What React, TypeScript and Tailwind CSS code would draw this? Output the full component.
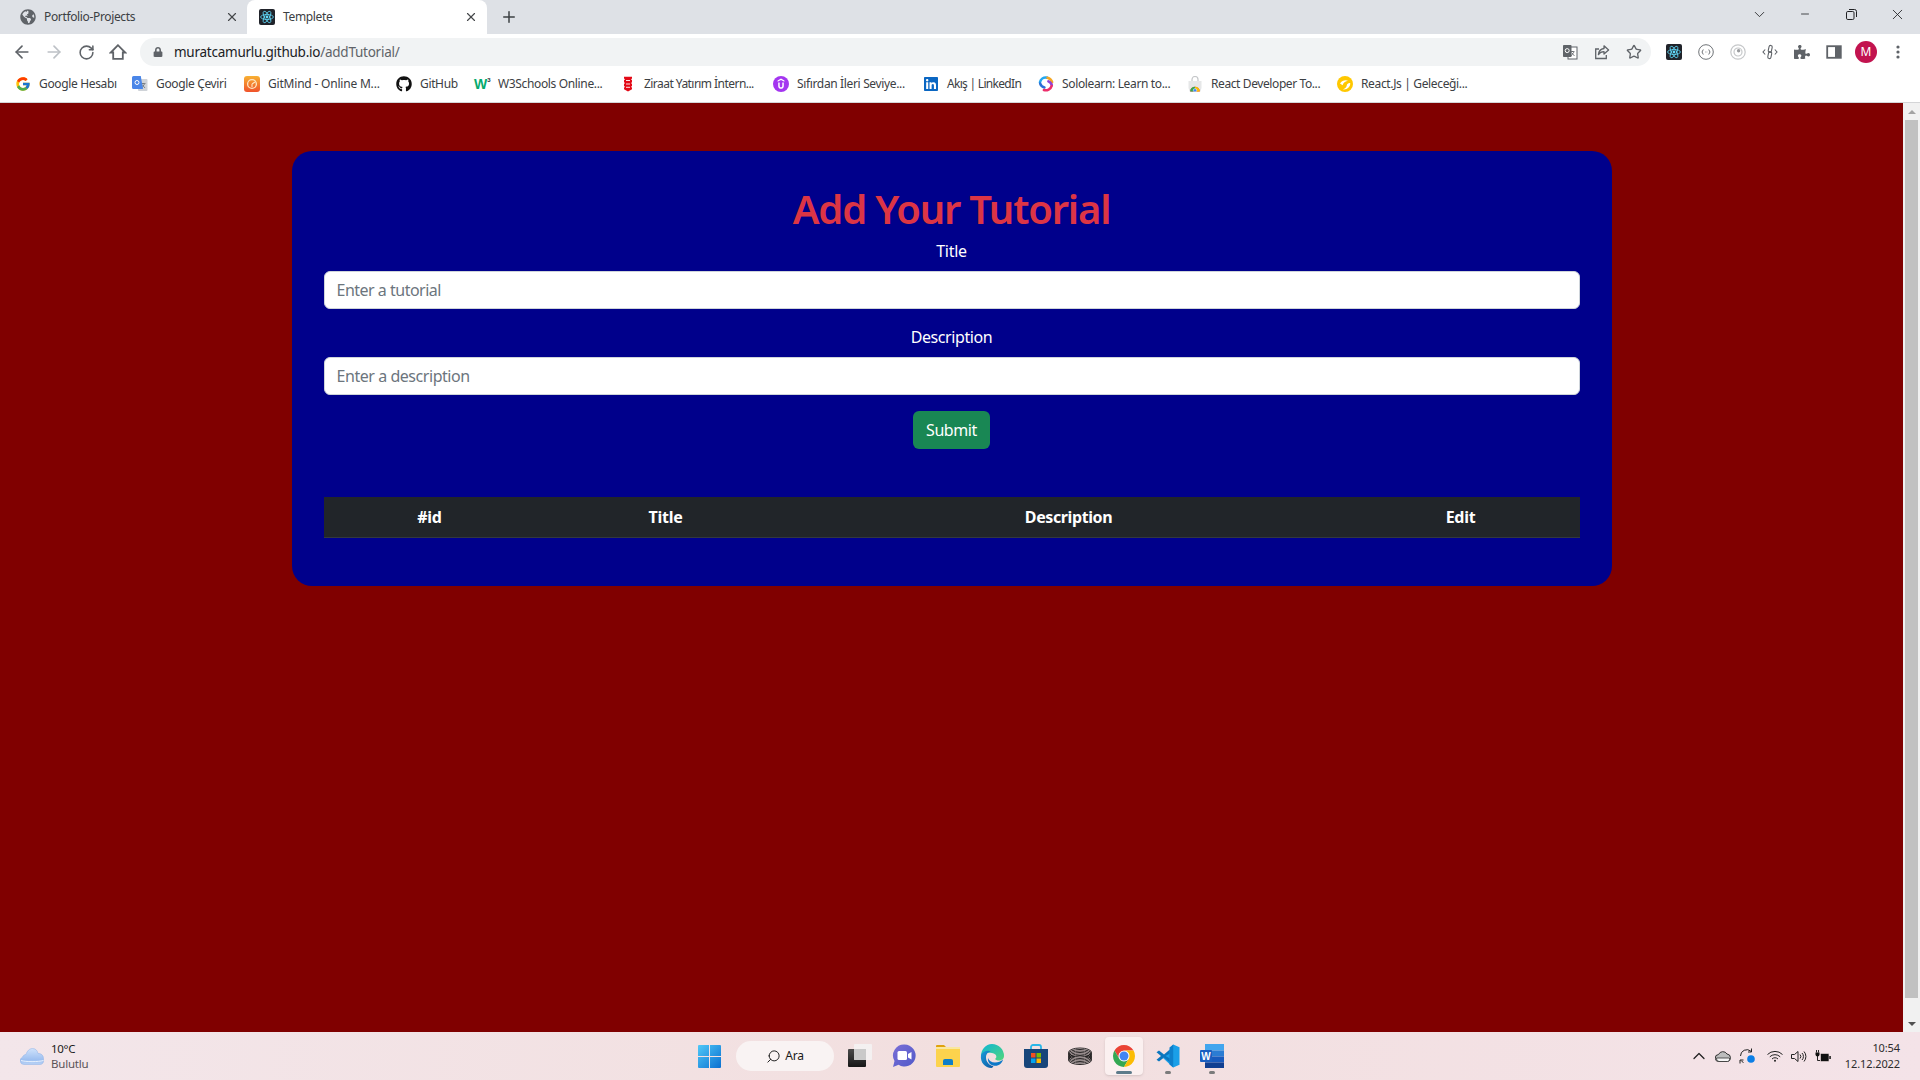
import React from "react";
import { ArrowLeft, ArrowRight, RotateCw, Star, X, Plus, ChevronDown, Minus, ChevronUp, Search } from "lucide-react";
import { FcGoogle } from "react-icons/fc";
import { FaGithub, FaGlobeAmericas, FaLock, FaPuzzlePiece, FaLinkedin } from "react-icons/fa";

const ReactLogo = () => (
  <svg width="16" height="16" viewBox="0 0 16 16">
    <rect width="16" height="16" rx="2" fill="#20232a" />
    <g fill="none" stroke="#61dafb" strokeWidth="0.8">
      <ellipse cx="8" cy="8" rx="6.4" ry="2.5" />
      <ellipse cx="8" cy="8" rx="6.4" ry="2.5" transform="rotate(60 8 8)" />
      <ellipse cx="8" cy="8" rx="6.4" ry="2.5" transform="rotate(120 8 8)" />
    </g>
    <circle cx="8" cy="8" r="1.4" fill="#61dafb" />
  </svg>
);

const HouseIcon = () => (
  <svg width="18" height="18" viewBox="0 0 18 18" fill="none" stroke="#5f6368" strokeWidth="1.8" strokeLinejoin="miter">
    <path d="M9 2.200 1.800 9.500h2.400v6.300h9.600V9.500h2.400z" />
  </svg>
);

const TranslateIcon = () => (
  <svg width="16" height="16" viewBox="0 0 16 16">
    <rect x="6" y="3" width="9" height="12" fill="#fff" stroke="#5f6368" strokeWidth="1" />
    <path d="M8.5 7.5h4M10.5 7v1M9 12l3-4M9.5 8.5l3 3.5" stroke="#5f6368" strokeWidth="0.8" fill="none" />
    <rect x="1" y="1" width="8.5" height="12" rx="0.8" fill="#5f6368" />
    <circle cx="5.2" cy="6.6" r="2" fill="none" stroke="#fff" strokeWidth="1" />
  </svg>
);

const ShareIcon = () => (
  <svg width="16" height="16" viewBox="0 0 16 16" fill="none" stroke="#5f6368" strokeWidth="1.3">
    <path d="M5 5H1.7v9.5h10.6V11" />
    <path d="M10 1.8 14.6 6 10 10V7.6c-2.8 0-4.4 1-5.6 3C4.7 7.4 6.3 5 10 4.5z" strokeLinejoin="round" />
  </svg>
);

const SidePanelIcon = () => (
  <svg width="16" height="16" viewBox="0 0 16 16">
    <rect x="1.2" y="2.2" width="13.6" height="11.6" fill="#fff" stroke="#5f6368" strokeWidth="1.8" />
    <rect x="9" y="2" width="6" height="12" fill="#5f6368" />
  </svg>
);

const ExtCircle = () => (
  <svg width="16" height="16" viewBox="0 0 16 16" fill="none" stroke="#5f6368">
    <circle cx="8" cy="8" r="7.3" strokeWidth="0.9" />
    <path d="M5.3 5.5 4 8l1.3 2.5M10.7 5.5 12 8l-1.3 2.5" strokeWidth="0.9" />
    <path d="M7 8h.5M8.7 8h.5" strokeWidth="0.9" />
  </svg>
);

const ExtTarget = () => (
  <svg width="16" height="16" viewBox="0 0 16 16" fill="none" stroke="#c6c8ca">
    <circle cx="8" cy="8" r="7.2" strokeWidth="1.2" />
    <circle cx="8" cy="8" r="4" strokeWidth="1.2" />
    <circle cx="8.6" cy="6.8" r="1.7" fill="#9a9c9f" stroke="none" />
  </svg>
);

const ExtChain = () => (
  <svg width="16" height="16" viewBox="0 0 16 16" fill="none" stroke="#5f6368" strokeWidth="1.1">
    <path d="M3.2 5.5 1 8l2.2 2.5M12.8 5.5 15 8l-2.2 2.5" />
    <rect x="6.6" y="1.3" width="3.2" height="7" rx="1.6" transform="rotate(12 8 5)" />
    <rect x="6.2" y="7.7" width="3.2" height="7" rx="1.6" transform="rotate(12 8 11)" />
  </svg>
);

const Dots = () => (
  <svg width="4" height="16" viewBox="0 0 4 16" fill="#5f6368">
    <circle cx="2" cy="3" r="1.6" />
    <circle cx="2" cy="8" r="1.6" />
    <circle cx="2" cy="13" r="1.6" />
  </svg>
);

const RestoreIcon = () => (
  <svg width="11" height="11" viewBox="0 0 11 11" fill="none" stroke="#202124" strokeWidth="1">
    <rect x="0.5" y="2.5" width="7.5" height="8" rx="1.3" />
    <path d="M3 .5h5.5a2 2 0 0 1 2 2V8" />
  </svg>
);

const GTranslate = () => (
  <svg width="16" height="16" viewBox="0 0 16 16">
    <rect x="6" y="3" width="9.5" height="12" rx="1" fill="#cfd3d8" />
    <path d="M9 7.5h4.5M11 7v1M9.5 12.5l3-4.5M10 8.5l3 3.5" stroke="#6b7075" strokeWidth="0.8" fill="none" />
    <path d="M1.5 0h7.3L11 13H1.5A1.5 1.5 0 0 1 0 11.5v-10A1.5 1.5 0 0 1 1.5 0z" fill="#4a86e8" />
    <circle cx="5" cy="6.5" r="2" fill="none" stroke="#fff" strokeWidth="1" />
  </svg>
);

const GitMind = () => (
  <svg width="16" height="16" viewBox="0 0 16 16">
    <defs>
      <linearGradient id="gm" x1="0" y1="0" x2="0" y2="1">
        <stop offset="0" stopColor="#f8b133" />
        <stop offset="1" stopColor="#f0522b" />
      </linearGradient>
    </defs>
    <rect width="16" height="16" rx="3" fill="url(#gm)" />
    <circle cx="8" cy="8" r="4.4" fill="none" stroke="#fde6c4" strokeWidth="1.3" />
    <path d="M8 8l3-2M8 8v3" stroke="#fde6c4" strokeWidth="1.1" />
  </svg>
);

const W3 = () => (
  <span className="flex h-4 w-4 items-start font-['Liberation_Sans',sans-serif] font-bold leading-none text-[#04aa6d]">
    <span className="text-[14px] leading-4">W</span>
    <span className="text-[6px] leading-[8px] text-[#282a35]">3</span>
  </span>
);

const Ziraat = () => (
  <svg width="16" height="16" viewBox="0 0 16 16">
    <path d="M4 .8h8v1.6l-1 .8 1 1v2l-1 .8 1 1v2l-1 .8 1 1v1.4L8 15.4 4 13.2v-1.4l1-1-1-.8v-2l1-1-1-.8v-2l1-1-1-.8z" fill="#e30a17" />
    <path d="M6 4.5h4M6 8h4M6 11.3h4" stroke="#fff" strokeWidth="0.9" />
  </svg>
);

const Udemy = () => (
  <svg width="16" height="16" viewBox="0 0 16 16">
    <circle cx="8" cy="8" r="8" fill="#a435f0" />
    <path d="M8 2.6 11.4 4.6v1.2L8 3.9 4.6 5.8V4.6z" fill="#fff" />
    <path d="M5.2 6.6h1.5v3.2c0 1 .5 1.5 1.3 1.5s1.3-.5 1.3-1.5V6.6h1.5v3.3c0 1.9-1.1 2.8-2.8 2.8s-2.8-.9-2.8-2.8z" fill="#fff" />
  </svg>
);

const Sololearn = () => (
  <svg width="16" height="16" viewBox="0 0 16 16" fill="none" strokeWidth="2.6" strokeLinecap="round">
    <path d="M9 1.6C5.6 1 2.6 3 2 6.3" stroke="#22a7f0" />
    <path d="M2.2 7.6c.7 2 2.3 3.3 4.2 3.8" stroke="#2b6fd6" />
    <path d="M9.5 1.8c2.4.6 4 2.2 4.6 4.4" stroke="#f5a623" />
    <path d="M13.8 9.3c-.3-1.8-1.6-3.2-3.4-3.9" stroke="#8e44d8" />
    <path d="M13.6 10c-.8 3.2-4.6 5-7.6 4" stroke="#ec2e6b" />
  </svg>
);

const WebstoreBag = () => (
  <svg width="16" height="16" viewBox="0 0 16 16">
    <path d="M5 5V3.5a3 3 0 0 1 6 0V5" fill="none" stroke="#c5c7c9" strokeWidth="1.2" />
    <path d="M1.5 5h13v7l-1 3.5h-11l-1-3.5z" fill="#e6e7e8" />
    <path d="M3.2 15.5a4.8 4.8 0 0 1 9.6 0z" fill="#ea4335" />
    <path d="M8 10.7a4.8 4.8 0 0 0-4.8 4.8H8z" fill="#34a853" />
    <path d="M8 10.7a4.8 4.8 0 0 1 4.8 4.8H8z" fill="#fbbc05" />
    <circle cx="8" cy="14.3" r="1.7" fill="#4285f4" stroke="#fff" strokeWidth="0.5" />
  </svg>
);

const Lifebox = () => (
  <svg width="16" height="16" viewBox="0 0 16 16">
    <circle cx="8" cy="8" r="8" fill="#ffc800" />
    <path d="M3 7.5C5 4.2 8.8 3.5 11 4.8 8.8 5 6.5 6.4 5.6 9.3zM13.2 7c.4 3.5-2.8 6.8-7.2 6.4 2.6-.9 3.6-2.4 4-4.8.4-1 1.6-1.6 3.2-1.6z" fill="#fff" />
  </svg>
);

const WindowsLogo = () => (
  <svg width="23" height="23" viewBox="0 0 23 23">
    <defs>
      <linearGradient id="win" x1="0" y1="0" x2="1" y2="1">
        <stop offset="0" stopColor="#4fc8f8" />
        <stop offset="1" stopColor="#0a6fd0" />
      </linearGradient>
    </defs>
    <path d="M1 0h10v11H0V1a1 1 0 0 1 1-1zM12 0h10a1 1 0 0 1 1 1v10H12zM0 12h11v11H1a1 1 0 0 1-1-1zM12 12h11v10a1 1 0 0 1-1 1H12z" fill="url(#win)" />
  </svg>
);

const TaskView = () => (
  <svg width="24" height="24" viewBox="0 0 24 24">
    <defs>
      <linearGradient id="tv" x1="0" y1="0" x2="0" y2="1">
        <stop offset="0" stopColor="#4a4a4a" />
        <stop offset="1" stopColor="#161616" />
      </linearGradient>
    </defs>
    <rect x="0" y="5" width="18" height="18" rx="1" fill="url(#tv)" />
    <rect x="6" y="0" width="18" height="16" rx="1" fill="#f4f4f4" fillOpacity="0.82" />
    <rect x="6" y="5" width="12" height="11" fill="#c8c8c8" fillOpacity="0.9" />
  </svg>
);

const Teams = () => (
  <svg width="24" height="24" viewBox="0 0 24 24">
    <defs>
      <linearGradient id="te" x1="0" y1="0" x2="1" y2="1">
        <stop offset="0" stopColor="#7a6fd6" />
        <stop offset="1" stopColor="#5059c9" />
      </linearGradient>
    </defs>
    <path d="M12.6 0.5a11 11 0 1 1-6 20.2L1 23l1.5-6A11 11 0 0 1 12.6 0.5z" fill="url(#te)" />
    <rect x="5.5" y="7" width="9.5" height="9" rx="1.5" fill="#fff" />
    <path d="M16 10l3.5-2v7.500L16 13.500z" fill="#fff" />
  </svg>
);

const Folder = () => (
  <svg width="24" height="24" viewBox="0 0 24 24">
    <path d="M0 2a1 1 0 0 1 1-1h7l3 3H0z" fill="#dfa20e" />
    <rect x="0" y="3" width="24" height="20" rx="1" fill="#fcd34d" />
    <rect x="0" y="3" width="24" height="2" fill="#f9e79f" />
    <path d="M7 21v-4a2 2 0 0 1 2-2h6a2 2 0 0 1 2 2v4z" fill="#0e7fc9" />
  </svg>
);

const Edge = () => (
  <svg width="24" height="24" viewBox="0 0 24 24">
    <defs>
      <linearGradient id="ed1" x1="0" y1="0" x2="1" y2="1">
        <stop offset="0" stopColor="#0fb5d6" />
        <stop offset="1" stopColor="#51d67a" />
      </linearGradient>
      <linearGradient id="ed2" x1="0" y1="0" x2="1" y2="1">
        <stop offset="0" stopColor="#1a9ad9" />
        <stop offset="1" stopColor="#0c59a4" />
      </linearGradient>
    </defs>
    <path d="M12 0a12 12 0 0 1 12 12c0 3-2.500 4.500-5 4.500-2 0-3.500-.7-4-1.500 2-1 2.500-5-3-6C7 8 2.500 9.500 1 12 1 6 5.500 0 12 0z" fill="url(#ed1)" />
    <path d="M1 11c2-4 7-5 10-3.500-3.500.5-5 3-5 6 0 4 3 8 7.500 8.500-.5.500-1 2-2 2C5 24 0 18.500 1 11z" fill="url(#ed2)" />
    <path d="M13 21.500c-3.500-.8-5.500-4-5-7.500.8 2.500 3.500 4.500 7 4.500 3 0 6-1 8-3-1 4-5 7.500-10 6z" fill="#0d78c8" />
  </svg>
);

const Store = () => (
  <svg width="24" height="24" viewBox="0 0 24 24">
    <path d="M7 7V3a2 2 0 0 1 2-2h6a2 2 0 0 1 2 2v4" fill="none" stroke="#29b6e8" strokeWidth="1.8" />
    <path d="M0 5h24v16a3 3 0 0 1-3 3H3a3 3 0 0 1-3-3z" fill="#17457a" />
    <rect x="7" y="9" width="4.500" height="4.500" fill="#f25022" />
    <rect x="12.500" y="9" width="4.500" height="4.500" fill="#7fba00" />
    <rect x="7" y="14.500" width="4.500" height="4.500" fill="#00a4ef" />
    <rect x="12.500" y="14.500" width="4.500" height="4.500" fill="#ffb900" />
  </svg>
);

const Coil = () => (
  <svg width="24" height="24" viewBox="0 0 24 24" fill="none" stroke="#111" strokeWidth="0.9">
    <ellipse cx="12" cy="8.500" rx="11.500" ry="4.500" />
    <ellipse cx="12" cy="10" rx="11.500" ry="4.500" />
    <ellipse cx="12" cy="11.500" rx="11.500" ry="4.500" />
    <ellipse cx="12" cy="13" rx="11.500" ry="4.500" />
    <ellipse cx="12" cy="14.500" rx="11.500" ry="4.500" />
    <ellipse cx="12" cy="16" rx="11.500" ry="4.500" />
  </svg>
);

const Chrome = () => (
  <svg width="24" height="24" viewBox="0 0 48 48">
    <circle cx="24" cy="24" r="11" fill="#fff" />
    <path d="M4.95 13A22 22 0 0 1 43.05 13H24A11 11 0 0 0 14.47 29.500z" fill="#ea4335" />
    <path d="M4.95 13 14.47 29.500A11 11 0 0 0 33.500 29.500L24 46A22 22 0 0 1 4.95 13z" fill="#34a853" />
    <path d="M43.05 13H24A11 11 0 0 1 33.500 29.500L24 46A22 22 0 0 0 43.05 13z" fill="#fbbc05" />
    <circle cx="24" cy="24" r="9" fill="#4285f4" />
  </svg>
);

const VSCode = () => (
  <svg width="24" height="24" viewBox="0 0 24 24">
    <path d="M17.200 0.500 23.500 3.300v17.400l-6.300 2.800L7 14l3-3z" fill="#1a9fe8" />
    <path d="M17.200 0.500V23.500l-3.700-3V3.500z" fill="#0e7fcb" />
    <path d="M3 6.500.5 8.300 5 12 .5 15.700 3 17.500l5-4 5.500 4.800v-4L9.500 12l4-2.300v-4L8 10.500z" fill="#0a76bf" />
  </svg>
);

const Word = () => (
  <svg width="24" height="24" viewBox="0 0 24 24">
    <rect x="5" y="0" width="19" height="6.500" fill="#41a5ee" />
    <rect x="5" y="6.500" width="19" height="6" fill="#2b7cd3" />
    <rect x="5" y="12.500" width="19" height="6" fill="#185abd" />
    <rect x="5" y="18.500" width="19" height="5.500" fill="#103f91" />
    <rect x="0" y="6" width="12" height="12" rx="1" fill="#1a5fc0" />
    <text x="6" y="15.700" textAnchor="middle" fontSize="10" fontWeight="700" fill="#fff" fontFamily="Liberation Sans, sans-serif">W</text>
  </svg>
);

const TrayCloud = () => (
  <svg width="16" height="12" viewBox="0 0 16 12">
    <path d="M4 11.500a3.500 3.500 0 0 1-.5-7A4.800 4.800 0 0 1 12 4a3.800 3.800 0 0 1 .500 7.500z" fill="#bdbdbd" stroke="#333" strokeWidth="1" />
    <path d="M1.500 8h13v1.500a2 2 0 0 1-2 2H4a3 3 0 0 1-2.500-3.500z" fill="#f5f5f5" stroke="#333" strokeWidth="0.8" />
  </svg>
);

const SyncIcon = () => (
  <svg width="17" height="16" viewBox="0 0 17 16" fill="none" stroke="#222" strokeWidth="1">
    <path d="M1.500 8A6.300 6.300 0 0 1 12 3.300" />
    <path d="M12.500 .5v3.500H9" />
    <path d="M4.500 14.500A6 6 0 0 1 2 12.500" />
    <path d="M1 15.500V12h3.500" />
    <circle cx="12" cy="11" r="3.800" fill="#0b7fe6" stroke="none" />
  </svg>
);

const WifiIcon = () => (
  <svg width="16" height="12" viewBox="0 0 16 12" fill="none" stroke="#222" strokeWidth="1">
    <path d="M.5 4.500a10.600 10.600 0 0 1 15 0" />
    <path d="M2.800 6.800a7.400 7.400 0 0 1 10.400 0" />
    <path d="M5 9a4.200 4.200 0 0 1 6 0" />
    <circle cx="8" cy="10.700" r="1" fill="#222" stroke="none" />
  </svg>
);

const Speaker = () => (
  <svg width="16" height="13" viewBox="0 0 16 13" fill="none" stroke="#222" strokeWidth="1">
    <path d="M.5 4.500h3L7 1.500v10l-3.500-3h-3z" />
    <path d="M9 4.500a3 3 0 0 1 0 4M11 3a5 5 0 0 1 0 7M13 1.500a7.500 7.500 0 0 1 0 10" />
  </svg>
);

const Battery = () => (
  <svg width="16" height="13" viewBox="0 0 16 13">
    <path d="M1.500 0v2.500M3.500 0v2.500" stroke="#111" strokeWidth="0.9" />
    <path d="M.5 2.500h4v2a2 2 0 0 1-4 0z" fill="#111" />
    <path d="M2.500 6v4.500h2.500" fill="none" stroke="#111" strokeWidth="0.9" />
    <rect x="5.500" y="3.500" width="8.500" height="8" rx="1" fill="#111" stroke="#f2dfe2" strokeWidth="0.6" />
    <rect x="14.300" y="6" width="1.500" height="3" fill="#111" />
  </svg>
);

const WeatherCloud = () => (
  <svg width="24" height="17" viewBox="0 0 24 17">
    <defs>
      <linearGradient id="wc" x1="0" y1="0" x2="0" y2="1">
        <stop offset="0" stopColor="#cfe2fb" />
        <stop offset="0.7" stopColor="#9dbff0" />
        <stop offset="1" stopColor="#b9d2f5" />
      </linearGradient>
    </defs>
    <path d="M4 16.500a3.800 3.800 0 0 1-1.500-7.300C3 7.500 4.500 6.500 6 6.500 7 3 9.500.5 12.500.5c3 0 5 2 5.500 5 3-.3 5.500 1.800 5.500 5v2.500c0 2-1.500 3.500-3.500 3.500z" fill="url(#wc)" stroke="#8cb0e6" strokeWidth="0.5" />
    <path d="M1 12.500c5 1.500 17 1.500 22.500 0" stroke="#e6f0fd" strokeWidth="1" fill="none" />
  </svg>
);

const bookmarks = [
  { w: "w-[117px]", t: "tracking-[-0.35px]", label: "Google Hesabı", icon: <FcGoogle size={16} /> },
  { w: "w-[112px]", t: "tracking-[-0.35px]", label: "Google Çeviri", icon: <GTranslate /> },
  { w: "w-[152px]", t: "tracking-[-0.2px]", label: "GitMind - Online M...", icon: <GitMind /> },
  { w: "w-[78px]", t: "tracking-[-0.35px]", label: "GitHub", icon: <FaGithub size={16} color="#111" /> },
  { w: "w-[146px]", t: "tracking-[-0.35px]", label: "W3Schools Online...", icon: <W3 /> },
  { w: "w-[153px]", t: "tracking-[-0.55px]", label: "Ziraat Yatırım İntern...", icon: <Ziraat /> },
  { w: "w-[150px]", t: "tracking-[-0.35px]", label: "Sıfırdan İleri Seviye...", icon: <Udemy /> },
  { w: "w-[115px]", t: "tracking-[-0.7px]", label: "Akış | LinkedIn", icon: <FaLinkedin size={16} color="#0a66c2" /> },
  { w: "w-[149px]", t: "tracking-[-0.35px]", label: "Sololearn: Learn to...", icon: <Sololearn /> },
  { w: "w-[150px]", t: "tracking-[-0.4px]", label: "React Developer To...", icon: <WebstoreBag /> },
  { w: "w-[150px]", t: "tracking-[-0.35px]", label: "React.Js | Geleceği...", icon: <Lifebox /> },
];

export default function App() {
  return (
    <div className="flex h-screen w-full flex-col overflow-hidden font-['Noto_Sans',sans-serif]">
      {/* Tab strip */}
      <div className="flex h-[34px] shrink-0 items-start bg-[#dee1e6] text-[12px] text-[#3c4043]">
        <div className="flex h-[34px] w-[247px] items-center pl-[20px]">
          <FaGlobeAmericas size={16} color="#5f6368" />
          <span className="ml-2 tracking-[-0.35px]">Portfolio-Projects</span>
          <X size={14} strokeWidth={2} className="ml-auto mr-2 text-[#45474a]" />
        </div>
        <div className="relative flex h-[34px] w-[240px] items-center rounded-t-lg bg-white pl-3">
          <ReactLogo />
          <span className="ml-2 tracking-[-0.35px]">Templete</span>
          <X size={14} strokeWidth={2} className="ml-auto mr-[9px] text-[#45474a]" />
        </div>
        <div className="ml-2 flex h-[34px] w-7 items-center justify-center">
          <Plus size={18} strokeWidth={2} className="text-[#3c4043]" />
        </div>
        <div className="ml-auto flex h-7 items-center">
          <div className="flex w-[46px] justify-center"><ChevronDown size={17} strokeWidth={1.2} className="text-[#202124]" /></div>
          <div className="flex w-[46px] justify-center"><Minus size={12} strokeWidth={1.6} className="text-[#202124]" /></div>
          <div className="flex w-[46px] justify-center"><RestoreIcon /></div>
          <div className="flex w-[46px] justify-center"><X size={17} strokeWidth={1.2} className="text-[#202124]" /></div>
        </div>
      </div>

      {/* Toolbar */}
      <div className="flex h-9 shrink-0 items-center bg-white pl-[6px]">
        <div className="flex w-8 justify-center"><ArrowLeft size={20} strokeWidth={2} className="text-[#5f6368]" /></div>
        <div className="flex w-8 justify-center"><ArrowRight size={20} strokeWidth={2} className="text-[#bdc1c6]" /></div>
        <div className="flex w-8 justify-center"><RotateCw size={17} strokeWidth={2.2} className="text-[#5f6368]" /></div>
        <div className="flex w-8 justify-center"><HouseIcon /></div>
        <div className="ml-[6px] flex h-7 w-[1511px] items-center rounded-full bg-[#f1f3f4] pl-[13px] pr-px">
          <FaLock size={10} color="#5f6368" />
          <span className="ml-[11px] text-[13.5px] tracking-[-0.25px] text-[#202124]">
            muratcamurlu.github.io<span className="text-[#5f6368]">/addTutorial/</span>
          </span>
          <div className="ml-auto flex items-center">
            <div className="flex w-8 justify-center"><TranslateIcon /></div>
            <div className="flex w-8 justify-center"><ShareIcon /></div>
            <div className="flex w-8 justify-center"><Star size={16} strokeWidth={2} className="text-[#5f6368]" /></div>
          </div>
        </div>
        <div className="ml-[7px] flex items-center">
          <div className="flex w-8 justify-center"><ReactLogo /></div>
          <div className="flex w-8 justify-center"><ExtCircle /></div>
          <div className="flex w-8 justify-center"><ExtTarget /></div>
          <div className="flex w-8 justify-center"><ExtChain /></div>
          <div className="flex w-8 justify-center"><FaPuzzlePiece size={16} color="#5f6368" /></div>
          <div className="flex w-8 justify-center"><SidePanelIcon /></div>
          <div className="flex w-8 justify-center">
            <div className="flex h-[22px] w-[22px] items-center justify-center rounded-full bg-[#c2134f] text-[12px] text-white">M</div>
          </div>
          <div className="flex w-8 justify-center"><Dots /></div>
        </div>
      </div>

      {/* Bookmarks */}
      <div className="flex h-[33px] shrink-0 items-center border-b border-[#d4d5d7] bg-white pb-1 pl-[15px] text-[12px] text-[#3c4043]">
        {bookmarks.map((b) => (
          <div key={b.label} className={`flex shrink-0 items-center gap-2 whitespace-nowrap ${b.w}`}>
            <span className="flex h-4 w-4 shrink-0 items-center justify-center">{b.icon}</span>
            <span className={b.t}>{b.label}</span>
          </div>
        ))}
      </div>

      {/* Page + scrollbar */}
      <div className="flex min-h-0 flex-1">
        <main className="flex-1 overflow-hidden bg-[#800000] pt-12">
          <div className="mx-auto w-[1320px] rounded-[20px] bg-[#00008b] p-8 text-center text-[16px] leading-6 text-white">
            <h1 className="mb-2 pt-[3px] text-[40px] font-semibold leading-[45px] tracking-[-1.2px] text-[#dc3545]">Add Your Tutorial</h1>
            <label className="mb-2 block tracking-[-0.3px]">Title</label>
            <input
              placeholder="Enter a tutorial"
              className="mb-4 block h-[38px] w-full rounded-md border border-[#ced4da] bg-white px-3 text-[#212529] tracking-[-0.5px] placeholder:text-[#6c757d]"
            />
            <label className="mb-2 block tracking-[-0.4px]">Description</label>
            <input
              placeholder="Enter a description"
              className="mb-4 block h-[38px] w-full rounded-md border border-[#ced4da] bg-white px-3 text-[#212529] tracking-[-0.45px] placeholder:text-[#6c757d]"
            />
            <button className="h-[38px] w-[77px] rounded-md bg-[#198754] text-white tracking-[-0.4px]">Submit</button>
            <table className="mb-4 mt-12 w-full table-fixed border-collapse">
              <colgroup>
                <col className="w-[212px]" />
                <col className="w-[260px]" />
                <col className="w-[546px]" />
                <col className="w-[238px]" />
              </colgroup>
              <thead>
                <tr className="h-10 border-b border-[#32383e] bg-[#212529] font-bold text-white">
                  <th className="tracking-[-0.3px]">#id</th>
                  <th className="tracking-[-0.3px]">Title</th>
                  <th className="tracking-[-0.4px]">Description</th>
                  <th className="tracking-[-0.3px]">Edit</th>
                </tr>
              </thead>
            </table>
          </div>
        </main>
        <div className="flex w-[17px] shrink-0 flex-col items-center bg-[#f1f1f1]">
          <div className="flex h-[17px] w-full items-center justify-center">
            <div className="h-0 w-0 border-x-[4px] border-b-[4px] border-x-transparent border-b-[#a3a3a3]" />
          </div>
          <div className="h-[878px] w-[13px] bg-[#c1c1c1]" />
          <div className="mt-auto flex h-[17px] w-full items-center justify-center">
            <div className="h-0 w-0 border-x-[4px] border-t-[4px] border-x-transparent border-t-[#505050]" />
          </div>
        </div>
      </div>

      {/* Taskbar */}
      <div className="flex h-12 shrink-0 items-center bg-gradient-to-r from-[#f3e6ea] via-[#f2dfdf] to-[#f4e3e8] text-[#1a1a1a]">
        <div className="flex w-[698px] shrink-0 items-center gap-[7px] pl-5">
          <WeatherCloud />
          <div className="text-[11.5px] leading-[15px]">
            <div className="tracking-[-0.3px]">10°C</div>
            <div className="tracking-[-0.2px] text-[#5a5357]">Bulutlu</div>
          </div>
        </div>
        <WindowsLogo />
        <div className="ml-[15px] flex h-[30px] w-[98px] items-center justify-center gap-1 rounded-full bg-[#f9f3f3] text-[12px]">
          <Search size={15} strokeWidth={1.6} className="-scale-x-100 text-[#222]" />
          <span className="tracking-[-0.2px]">Ara</span>
        </div>
        <div className="ml-[14px] flex items-center gap-5">
          <TaskView />
          <Teams />
          <Folder />
          <Edge />
          <Store />
          <Coil />
          <div className="relative flex h-6 w-6 items-center justify-center">
            <div className="absolute -inset-x-[7px] -top-[7px] -bottom-[7px] rounded bg-[#fbf0f0] shadow-sm" />
            <div className="relative"><Chrome /></div>
            <div className="absolute -bottom-[6px] left-[4px] h-[3px] w-4 rounded-full bg-[#5d7b8a]" />
          </div>
          <div className="relative h-6 w-6">
            <VSCode />
            <div className="absolute -bottom-[6px] left-[9px] h-[3px] w-[6px] rounded-full bg-[#7b7b7b]" />
          </div>
          <div className="relative h-6 w-6">
            <Word />
            <div className="absolute -bottom-[6px] left-[9px] h-[3px] w-[6px] rounded-full bg-[#7b7b7b]" />
          </div>
        </div>
        <div className="ml-auto flex w-[233px] items-center pr-5">
          <div className="flex w-6 justify-center"><ChevronUp size={20} strokeWidth={1.5} className="text-[#222]" /></div>
          <div className="flex w-6 justify-center"><TrayCloud /></div>
          <div className="flex w-6 justify-center"><SyncIcon /></div>
          <div className="ml-1 flex w-6 justify-center"><WifiIcon /></div>
          <div className="flex w-6 justify-center"><Speaker /></div>
          <div className="flex w-6 justify-center"><Battery /></div>
          <div className="ml-auto text-right text-[11px] leading-[16px] tracking-[-0.1px] text-[#2c2c2c]">
            <div>10:54</div>
            <div>12.12.2022</div>
          </div>
        </div>
      </div>
    </div>
  );
}
